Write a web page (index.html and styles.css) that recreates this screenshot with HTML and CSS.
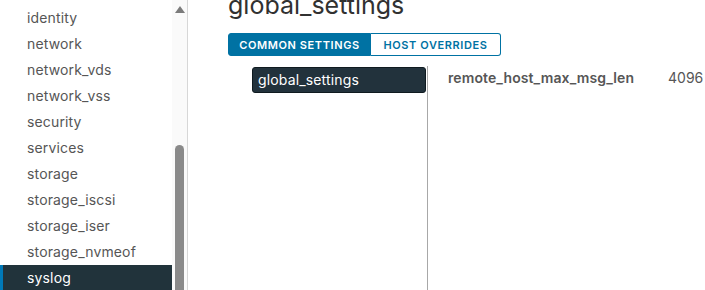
FILE: index.html
```html
<!DOCTYPE html>
<html>
<head>
<meta charset="utf-8">
<link rel="stylesheet" href="styles.css">
</head>
<body>
<div class="app">
  <aside class="sidebar">
    <ul class="nav">
      <li>identity</li>
      <li>network</li>
      <li>network_vds</li>
      <li>network_vss</li>
      <li>security</li>
      <li>services</li>
      <li>storage</li>
      <li>storage_iscsi</li>
      <li>storage_iser</li>
      <li>storage_nvmeof</li>
      <li class="active">syslog</li>
    </ul>
    <div class="scrollbar">
      <div class="arrow"></div>
      <div class="thumb"></div>
    </div>
  </aside>
  <main class="main">
    <h1 class="title">global_settings</h1>
    <div class="tabs">
      <button class="tab on">COMMON SETTINGS</button>
      <button class="tab">HOST OVERRIDES</button>
    </div>
    <div class="content">
      <div class="tree">
        <div class="node">global_settings</div>
      </div>
      <div class="detail">
        <span class="key">remote_host_max_msg_len</span>
        <span class="val">4096</span>
      </div>
    </div>
  </main>
</div>
</body>
</html>
```
FILE: styles.css
```css
html, body { margin: 0; padding: 0; background: #fff; }
body { font-family: Inter, "Noto Sans", sans-serif; color: #565656; overflow: hidden; }
.app { display: flex; height: 290px; }
.sidebar { display: flex; width: 187px; border-right: 1px solid #d7d7d7; flex: none; }
.nav { list-style: none; margin: 0; padding: 5px 0 0; width: 172px; }
.nav li { height: 26px; line-height: 26px; padding-left: 27px; font-size: 14px; letter-spacing: 0.15px; color: #565656; }
.nav li.active { background: #21333b; color: #fff; box-shadow: inset 3px 0 0 #0079b8; }
.scrollbar { width: 15px; background: #fafafa; position: relative; }
.arrow { position: absolute; left: 3px; top: 6px; width: 0; height: 0; border-left: 5px solid transparent; border-right: 5px solid transparent; border-bottom: 7px solid #7b7b7b; }
.thumb { position: absolute; left: 3px; top: 145px; width: 9px; bottom: 0; background: #8a8a8a; border-radius: 5px 5px 0 0; }
.main { flex: 1; padding-left: 40px; }
.title { margin: -13px 0 0; font-size: 25px; font-weight: 400; color: #313131; line-height: 36px; }
.tabs { display: flex; margin-top: 10px; }
.tab { height: 23px; font-family: Inter, sans-serif; font-size: 11px; font-weight: 600; letter-spacing: 0.6px; border: 1px solid #0072a3; background: #fff; color: #0072a3; padding: 0; margin: 0; white-space: nowrap; text-align: center; }
.tab:first-child { border-radius: 3px 0 0 3px; background: #0072a3; color: #fff; width: 143px; }
.tab:last-child { border-radius: 0 3px 3px 0; border-left: none; width: 130px; }
.content { display: flex; margin-top: 10px; height: 230px; }
.tree { width: 200px; border-right: 1px solid #a8a8a8; padding-left: 24px; box-sizing: border-box; flex: none; }
.node { margin-top: 1px; width: 174px; height: 26px; box-sizing: border-box; background: #22323c; border: 1px solid #0f1a20; border-radius: 3px; color: #fff; font-size: 14px; line-height: 24px; padding-left: 5px; letter-spacing: 0.15px; }
.detail { display: flex; padding: 3px 0 0 20px; font-size: 14px; }
.key { font-weight: 600; color: #565656; width: 220px; letter-spacing: 0.1px; }
.val { color: #565656; }
```
